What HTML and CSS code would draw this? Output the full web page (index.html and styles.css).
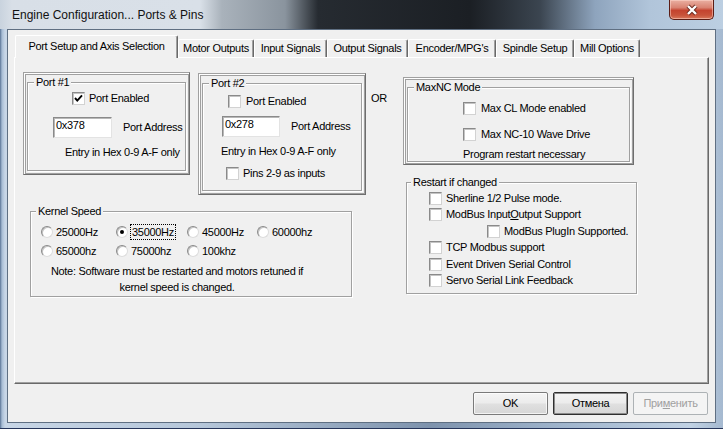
FILE: index.html
```html
<!DOCTYPE html>
<html>
<head>
<meta charset="utf-8">
<title>Engine Configuration</title>
<link rel="stylesheet" href="styles.css">
</head>
<body>
<div class="window">
  <div class="titlebar">
    <span class="title">Engine Configuration... Ports &amp; Pins</span>
    <div class="close">
      <svg width="14" height="12" viewBox="0 0 14 12">
        <path d="M3 2 L11 10 M11 2 L3 10" stroke="#6a2a1f" stroke-width="4.2" fill="none"/>
        <path d="M3 2 L11 10 M11 2 L3 10" stroke="#ffffff" stroke-width="2.4" fill="none"/>
      </svg>
    </div>
  </div>
  <div class="client">
    <div class="tabs">
      <div class="tab active w0">Port Setup and Axis Selection</div>
      <div class="tab w1">Motor Outputs</div>
      <div class="tab w2">Input Signals</div>
      <div class="tab w3">Output Signals</div>
      <div class="tab w4">Encoder/MPG's</div>
      <div class="tab w5">Spindle Setup</div>
      <div class="tab w6">Mill Options</div>
    </div>
    <div class="panel">
      <div class="leftcol">
        <div class="ports">
          <div class="frame port1">
            <fieldset class="group">
              <legend>Port #1</legend>
              <div class="cbrow p1-en"><span class="cb checked"><svg width="11" height="11" viewBox="0 0 11 11"><path d="M2 5 L4.3 7.6 L9 2.4" fill="none" stroke="#000" stroke-width="1.9"/></svg></span><span>Port Enabled</span></div>
              <div class="addr p1-addr"><span class="input">0x378</span><span class="addr-label">Port Address</span></div>
              <div class="hint p1-hint">Entry in Hex 0-9 A-F only</div>
            </fieldset>
          </div>
          <div class="frame port2">
            <fieldset class="group">
              <legend>Port #2</legend>
              <div class="cbrow p2-en"><span class="cb"></span><span>Port Enabled</span></div>
              <div class="addr p2-addr"><span class="input">0x278</span><span class="addr-label">Port Address</span></div>
              <div class="hint p2-hint">Entry in Hex 0-9 A-F only</div>
              <div class="cbrow p2-pins"><span class="cb"></span><span>Pins 2-9 as inputs</span></div>
            </fieldset>
          </div>
          <div class="or">OR</div>
        </div>
        <fieldset class="group kernel">
          <legend>Kernel Speed</legend>
          <div class="radios">
            <div class="ropt"><span class="radio"></span><span>25000Hz</span></div>
            <div class="ropt"><span class="radio on"></span><span class="focus">35000Hz</span></div>
            <div class="ropt"><span class="radio"></span><span>45000Hz</span></div>
            <div class="ropt"><span class="radio"></span><span>60000hz</span></div>
            <div class="ropt"><span class="radio"></span><span>65000hz</span></div>
            <div class="ropt"><span class="radio"></span><span>75000hz</span></div>
            <div class="ropt"><span class="radio"></span><span>100khz</span></div>
          </div>
          <div class="note">Note: Software must be restarted and motors retuned if<br>kernel speed is changed.</div>
        </fieldset>
      </div>
      <div class="rightcol">
        <div class="frame maxnc">
          <fieldset class="group">
            <legend>MaxNC Mode</legend>
            <div class="cbrow m-1"><span class="cb"></span><span>Max CL Mode enabled</span></div>
            <div class="cbrow m-2"><span class="cb"></span><span>Max NC-10 Wave Drive</span></div>
            <div class="hint m-hint">Program restart necessary</div>
          </fieldset>
        </div>
        <fieldset class="group restart">
          <legend>Restart if changed</legend>
          <div class="rrow first"><span class="cb"></span><span>Sherline 1/2 Pulse mode.</span></div>
          <div class="rrow"><span class="cb"></span><span>ModBus Input<u>O</u>utput Support</span></div>
          <div class="rrow nested"><span class="cb"></span><span>ModBus PlugIn Supported.</span></div>
          <div class="rrow"><span class="cb"></span><span>TCP Modbus support</span></div>
          <div class="rrow"><span class="cb"></span><span>Event Driven Serial Control</span></div>
          <div class="rrow"><span class="cb"></span><span>Servo Serial Link Feedback</span></div>
        </fieldset>
      </div>
    </div>
    <div class="buttons">
      <div class="btn">OK</div>
      <div class="btn default">Отмена</div>
      <div class="btn disabled">При<u>м</u>енить</div>
    </div>
  </div>
</div>
</body>
</html>
```

FILE: styles.css
```css
* { box-sizing: border-box; }
html, body { margin: 0; padding: 0; }
body {
  width: 723px;
  height: 429px;
  overflow: hidden;
  font-family: "Liberation Sans", Arial, sans-serif;
  font-size: 11px;
  letter-spacing: -0.3px;
  color: #000;
}
.window {
  width: 723px;
  height: 429px;
  display: flex;
  flex-direction: column;
  background: linear-gradient(90deg, #5a7394 0, #a7bcd4 2px, #c8d6e6 5px, #c2d1e2 60px, #b6c7da 200px, #7e93ad 430px, #9fb4cc 560px, #c1d2e4 690px, #a5b9d0 723px);
  box-shadow: inset 0 -1px 0 #26355a;
}
.titlebar {
  height: 29px;
  flex: none;
  display: flex;
  justify-content: space-between;
  align-items: flex-start;
  background: linear-gradient(90deg, #c9d3de 0, #d8dfe7 12px, #d9e0e8 200px, #a9b2bb 222px, #8a949e 285px, #262b31 318px, #1b1f24 470px, #3b4550 540px, #8ea4bd 595px, #b1c5da 650px, #bccfe2 723px);
}
.title {
  font-size: 12px;
  letter-spacing: 0;
  line-height: 14px;
  margin: 8px 0 0 12px;
  color: #111;
}
.close {
  width: 45px;
  height: 20px;
  margin-right: 9px;
  display: flex;
  align-items: center;
  justify-content: center;
  border: 1px solid #5b1d15;
  border-top: none;
  border-radius: 0 0 5px 5px;
  background: linear-gradient(#eab0a2 0%, #d98372 40%, #c4432f 55%, #c8533a 80%, #d9785c 100%);
  box-shadow: inset 0 0 0 1px rgba(255, 220, 210, 0.5);
}
.client {
  margin-left: 7px;
  width: 709px;
  height: 394px;
  flex: none;
  background: #f0f0f0;
  border: 1px solid #5f6f82;
  display: flex;
  flex-direction: column;
}
.tabs {
  height: 27px;
  flex: none;
  display: flex;
  align-items: flex-end;
  padding-left: 7px;
  position: relative;
  z-index: 1;
}
.tab {
  height: 18px;
  border-top: 1px solid #fff;
  border-left: 1px solid #fff;
  border-right: 1px solid #696969;
  box-shadow: inset -1px 0 0 #a0a0a0;
  border-radius: 2px 2px 0 0;
  padding-top: 2px;
  line-height: 13px;
  text-align: center;
  white-space: nowrap;
  background: #f0f0f0;
}
.tab.active {
  height: 23px;
  padding-top: 4px;
  margin-bottom: -1px;
}
.w0 { width: 163px; }
.w1 { width: 76px; }
.w2 { width: 73px; }
.w3 { width: 81px; }
.w4 { width: 88px; }
.w5 { width: 78px; }
.w6 { width: 66px; }
.panel {
  margin-left: 6px;
  width: 695px;
  height: 327px;
  flex: none;
  border: 1px solid;
  border-color: #fff #696969 #696969 #fff;
  box-shadow: inset -1px -1px 0 #a0a0a0;
  display: flex;
  align-items: flex-start;
  padding-left: 8px;
}
.leftcol { width: 380px; flex: none; padding-top: 14px; }
.rightcol { width: 240px; flex: none; padding-top: 19px; }
.ports { display: flex; align-items: flex-start; }
.frame {
  border: 1px solid;
  border-color: #a0a0a0 #6e6e6e #6e6e6e #a0a0a0;
  box-shadow: inset 1px 1px 0 #fff, inset -1px -1px 0 #a0a0a0, inset 2px 2px 0 #a0a0a0;
  padding: 3px;
  display: flex;
  flex-direction: column;
}
.frame > .group { flex: 1; }
.group {
  margin: 0;
  padding: 0;
  min-width: 0;
  border: 1px solid #a0a0a0;
  box-shadow: inset 1px 1px 0 #fff, 1px 1px 0 #fff;
}
.group legend {
  padding: 0 2px;
  margin-left: 6px;
  line-height: 13px;
  background: #f0f0f0;
}
.port1 { width: 167px; height: 103px; }
.port2 { width: 168px; height: 122px; margin-left: 8px; margin-top: 1px; }
.or { margin-left: 5px; margin-top: 19.5px; line-height: 13px; }
.cbrow {
  display: flex;
  align-items: center;
  height: 14px;
  line-height: 13px;
  white-space: nowrap;
}
.cb {
  width: 13px;
  height: 13px;
  flex: none;
  margin-right: 4px;
  background: #fff;
  border: 1px solid;
  border-color: #8a8a8a #d2d2d2 #d2d2d2 #8a8a8a;
  box-shadow: inset 1px 1px 0 #c4c4c4;
  display: flex;
}
.addr { display: flex; align-items: center; height: 21px; white-space: nowrap; }
.input {
  width: 59px;
  height: 21px;
  background: #fff;
  border: 1px solid;
  border-color: #8a8a8a #e3e3e3 #e3e3e3 #8a8a8a;
  box-shadow: inset 1px 1px 0 #b8b8b8;
  padding: 1px 2px;
  line-height: 13px;
}
.addr-label { margin-left: 11px; line-height: 13px; }
.hint { line-height: 13px; white-space: nowrap; }
.p1-en { margin-top: 2px; margin-left: 44px; }
.p1-addr { margin-top: 12px; margin-left: 25px; }
.p1-hint { margin-top: 7.5px; margin-left: 37px; }
.p2-en { margin-top: 4px; margin-left: 25px; }
.p2-en .cb { margin-right: 5px; }
.p2-addr { margin-top: 8px; margin-left: 19px; }
.p2-addr .input { width: 58px; }
.p2-hint { margin-top: 7.5px; margin-left: 18px; }
.p2-pins { margin-top: 8.5px; margin-left: 23px; }
.kernel { width: 322px; margin-top: 9.5px; margin-left: 7px; }
.kernel legend { margin-left: 5px; }
.radios {
  margin-top: 5px;
  margin-left: 10px;
  display: grid;
  grid-template-columns: 75px 71px 70px auto;
  grid-auto-rows: 19px;
  align-items: center;
}
.ropt { display: flex; align-items: center; white-space: nowrap; line-height: 13px; }
.radio {
  width: 12px;
  height: 12px;
  flex: none;
  margin-right: 3px;
  border-radius: 50%;
  background: #fff;
  border: 1px solid;
  border-color: #8a8a8a #dcdcdc #dcdcdc #8a8a8a;
  box-shadow: inset 1px 1px 0 #c4c4c4;
  display: flex;
  align-items: center;
  justify-content: center;
}
.radio.on::after {
  content: "";
  width: 4px;
  height: 4px;
  border-radius: 50%;
  background: #000;
}
.focus {
  border: 1px dotted #000;
  padding: 1px 1px;
  margin-left: -1px;
  line-height: 12px;
}
.note {
  margin-top: 2.5px;
  margin-right: 28px;
  padding-bottom: 1px;
  line-height: 16px;
  text-align: center;
}
.maxnc { width: 231px; height: 88px; }
.m-1 { margin-top: 7.5px; margin-left: 55px; }
.m-2 { margin-top: 11.5px; margin-left: 55px; }
.m-1 .cb, .m-2 .cb { margin-right: 5px; }
.m-hint { margin-top: 6.5px; margin-left: 55px; }
.restart { width: 231px; margin-top: 10.5px; margin-left: 3px; padding-bottom: 4px; }
.restart legend { margin-left: 4px; }
.rrow {
  display: flex;
  align-items: center;
  height: 16.5px;
  margin-left: 22px;
  line-height: 13px;
  white-space: nowrap;
}
.rrow.first { margin-top: 1.25px; }
.rrow.nested { margin-left: 80px; }
.buttons {
  margin-top: 8px;
  display: flex;
  justify-content: flex-end;
  gap: 5px;
  padding-right: 7px;
}
.btn {
  width: 75px;
  height: 23px;
  border: 1px solid #7a7a7a;
  border-radius: 2px;
  background: linear-gradient(#f4f4f4 0%, #ececec 48%, #e0e0e0 52%, #d6d6d6 100%);
  box-shadow: inset 0 0 0 1px rgba(255, 255, 255, 0.7);
  text-align: center;
  line-height: 21px;
}
.btn.default {
  border-color: #2f2f2f;
  box-shadow: inset 0 0 0 1px #8a8a8a;
}
.btn.disabled {
  color: #a0a0a0;
  border-color: #adb2b5;
  background: #f4f4f4;
  box-shadow: none;
}
```
